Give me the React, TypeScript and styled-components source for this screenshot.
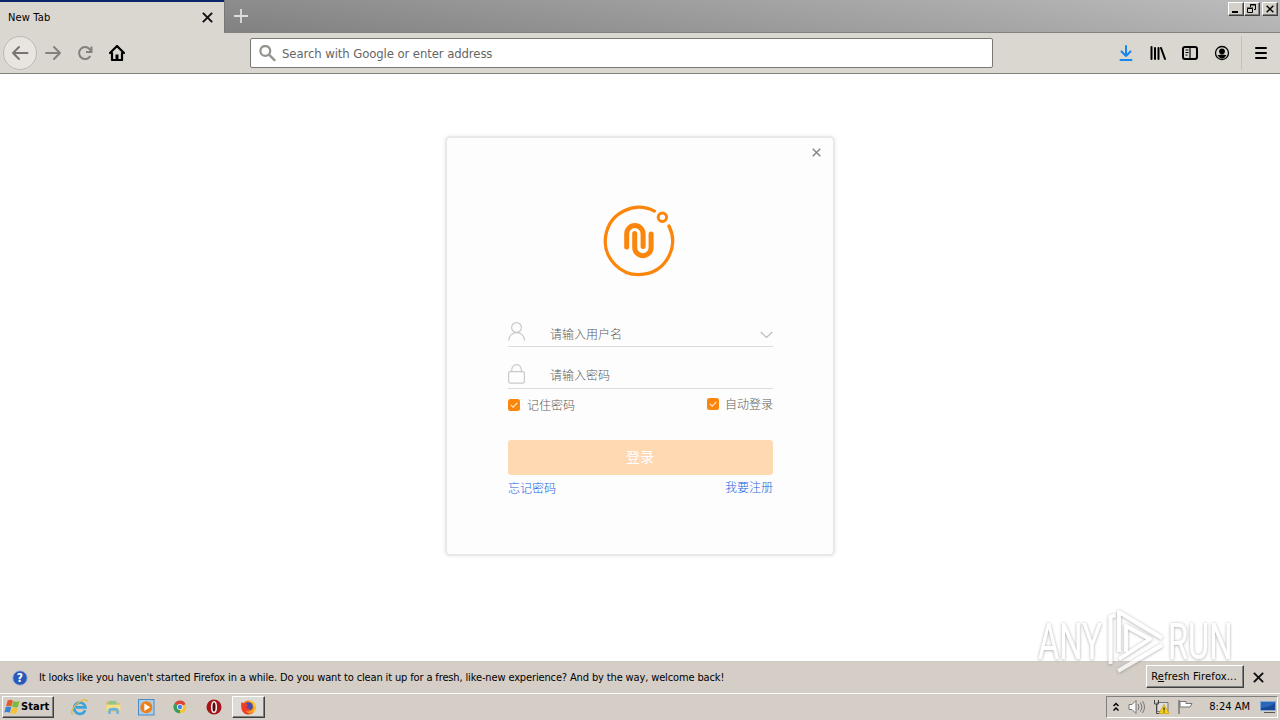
import * as React from 'react'
import styled, { createGlobalStyle } from 'styled-components';

const GlobalStyle = createGlobalStyle`
    * { box-sizing: border-box; }
    body {
        margin: 0;
        overflow: hidden;
        font-family: "DejaVu Sans Condensed", "DejaVu Sans", "Noto Sans CJK SC", sans-serif;
        font-size: 11px;
        color: #000;
    }
    svg { display: block; flex: none; }
`
const Screen = styled.div`
    position: relative;
    display: flex;
    flex-direction: column;
    width: 1280px;
    height: 720px;
    background: #fff;
`
const Label = styled.span<{ $size?: number; $spacing?: number; $color?: string }>`
    font-size: ${p => p.$size || 11}px;
    letter-spacing: ${p => p.$spacing || 0}px;
    color: ${p => p.$color || '#000'};
    white-space: nowrap;
    line-height: 16px;
`
const TabStrip = styled.div`
    display: flex;
    height: 33px;
    flex: none;
    background: linear-gradient(to bottom, rgba(255,255,255,.06), rgba(0,0,0,.03)),
        linear-gradient(to right, #868686 0, #868686 260px, #a9a9a9 1000px, #b9b9b9 1280px);
    border-bottom: 1px solid #848280;
`
const Tab = styled.div`
    display: flex;
    align-items: center;
    justify-content: space-between;
    width: 224px;
    height: 33px;
    padding: 0 11px 1px 8px;
    background: #dad6d0;
    border-top: 2px solid #0a246a;
`
const TabTitle = styled.div`
    padding-top: 1px;
`
const NewTab = styled.div`
    display: flex;
    align-items: center;
    width: 40px;
    padding-left: 9px;
    border-left: 1px solid #777;
`
const WindowButtons = styled.div`
    display: flex;
    margin: 2px 2px 0 auto;
`
const WindowButton = styled.div<{ $gap?: boolean }>`
    display: flex;
    align-items: center;
    justify-content: center;
    width: 16px;
    height: 14px;
    margin-left: ${p => (p.$gap ? 2 : 0)}px;
    background: #d4d0c8;
    border: 1px solid;
    border-color: #fff #404040 #404040 #fff;
    box-shadow: inset -1px -1px #808080;
`
const Toolbar = styled.div`
    display: flex;
    align-items: center;
    height: 41px;
    flex: none;
    padding: 0 12px 0 3px;
    background: #dad6d0;
    border-bottom: 1px solid #82807d;
`
const BackButton = styled.div`
    display: flex;
    align-items: center;
    justify-content: center;
    width: 34px;
    height: 34px;
    border: 1px solid #bdb9b3;
    border-radius: 50%;
    background: #e8e5e1;
`
const NavIcons = styled.div`
    display: flex;
    gap: 16px;
    width: 213px;
    padding-left: 8px;
`
const AddressBar = styled.div`
    display: flex;
    align-items: center;
    gap: 6px;
    width: 743px;
    height: 30px;
    padding: 1px 0 0 8px;
    background: #fff;
    border: 1px solid #7b7975;
    border-radius: 2px;
`
const ToolIcons = styled.div`
    display: flex;
    align-items: center;
    gap: 16px;
    margin-left: auto;
    padding-right: 11px;
`
const MenuSlot = styled.div`
    display: flex;
    align-items: center;
    height: 34px;
    padding-left: 12px;
    border-left: 1px solid #c4c0ba;
`
const Page = styled.div`
    display: flex;
    flex: 1;
    justify-content: center;
    align-items: flex-start;
    padding-top: 64px;
`
const LoginCard = styled.div`
    display: flex;
    flex-direction: column;
    width: 386px;
    height: 416px;
    padding: 0 60px 0 61px;
    background: #fdfdfd;
    border-radius: 3px;
    box-shadow: 0 0 0 2px #e9e9e9, 0 0 3px 3px #f1f1f1;
`
const CloseRow = styled.div`
    display: flex;
    justify-content: flex-end;
    height: 67px;
    margin-right: -48px;
    padding-top: 10px;
`
const LogoRow = styled.div`
    display: flex;
    justify-content: center;
    height: 109px;
    padding-right: 4px;
`
const Field = styled.div<{ $top?: number }>`
    display: flex;
    align-items: center;
    height: 33px;
    margin-top: ${p => p.$top || 0}px;
    border-bottom: 1px solid #dcdcdc;
`
const FieldIcon = styled.div<{ $drop: number }>`
    width: 18px;
    padding-top: ${p => p.$drop}px;
`
const Placeholder = styled.span<{ $drop: number }>`
    flex: 1;
    padding: ${p => p.$drop}px 0 0 24px;
    font: 300 12px/18px "Noto Sans CJK SC", sans-serif;
    color: #5c5c5c;
`
const Split = styled.div<{ $height: number }>`
    display: flex;
    justify-content: space-between;
    height: ${p => p.$height}px;
`
const Check = styled.label<{ $gap: number; $drop: number }>`
    display: flex;
    align-items: center;
    gap: ${p => p.$gap}px;
    height: 18px;
    margin-top: ${p => p.$drop}px;
    font: 300 12px/18px "Noto Sans CJK SC", sans-serif;
    color: #5c5c5c;
`
const LoginButton = styled.button`
    height: 35px;
    flex: none;
    padding: 0 1px 2px 0;
    border: 0;
    border-radius: 3px;
    background: #ffd9b1;
    color: #fff;
    font: 400 14px/33px "Noto Sans CJK SC", sans-serif;
`
const Link = styled.a<{ $drop: number }>`
    margin-top: ${p => p.$drop}px;
    font: 300 12px/18px "Noto Sans CJK SC", sans-serif;
    color: #1a62e0;
`
const NoticeBar = styled.div`
    display: flex;
    align-items: center;
    height: 32px;
    flex: none;
    padding: 0 16px 0 12px;
    background: #d4cec7;
    border-top: 1px solid #cdcac4;
`
const NoticeText = styled.div`
    flex: 1;
    padding-left: 11px;
`
const RaisedButton = styled.div`
    display: flex;
    align-items: center;
    justify-content: center;
    width: 98px;
    height: 23px;
    margin: 0 9px 2px 0;
    padding-right: 2px;
    background: #d4cfc8;
    border: 1px solid;
    border-color: #fff #404040 #404040 #fff;
    box-shadow: inset -1px -1px #808080;
`
const Taskbar = styled.div`
    display: flex;
    align-items: center;
    height: 27px;
    flex: none;
    padding: 0 2px;
    background: #d4cec7;
    border-top: 1px solid #fff;
`
const StartButton = styled.div`
    display: flex;
    align-items: center;
    width: 52px;
    height: 22px;
    padding-left: 1px;
    font-weight: bold;
    border: 1px solid;
    border-color: #fff #404040 #404040 #fff;
    box-shadow: inset -1px -1px #808080;
`
const QuickLaunch = styled.div`
    display: flex;
    align-items: center;
    gap: 16px;
    padding: 0 10px 0 17px;
`
const ActiveApp = styled.div`
    display: flex;
    align-items: center;
    justify-content: center;
    width: 33px;
    height: 22px;
    background: #dedad5;
    border: 1px solid;
    border-color: #fff #404040 #404040 #fff;
    box-shadow: inset -1px -1px #808080;
`
const Tray = styled.div`
    display: flex;
    align-items: center;
    width: 172px;
    height: 22px;
    margin-left: auto;
    padding: 0 1px 0 6px;
    border: 1px solid;
    border-color: #808080 #fff #fff #808080;
`
const TrayIcons = styled.div`
    display: flex;
    align-items: center;
    gap: 7px;
    padding-left: 9px;
`
const Clock = styled.div`
    display: flex;
    align-items: center;
    gap: 10px;
    margin-left: auto;
`
const Watermark = styled.svg`
    position: absolute;
    left: 1030px;
    top: 602px;
`

const Cross = ({ size, color, width }: { size: number; color: string; width: number }) => (
    <svg width={size} height={size} viewBox="0 0 10 10" fill="none" stroke={color} strokeWidth={width}>
        <path d="M.8 .8 9.2 9.2M9.2 .8 .8 9.2" />
    </svg>
)

const Logo = () => (
    <svg width="72" height="72" viewBox="13 15 72 72" fill="none" stroke="#fb860b" strokeLinecap="round">
        <path d="M64.3 21.1A33.6 33.6 0 1 0 79 36" strokeWidth="3.3" />
        <circle cx="72.4" cy="27.3" r="4.2" strokeWidth="3" />
        <path d="M36.7 57V43.8a8.2 8.2 0 0 1 16.4 0V56.5" strokeWidth="5" />
        <path d="M44.7 43.5V57.5a8.2 8.2 0 0 0 16.4 0V44" strokeWidth="5" />
    </svg>
)

const CheckMark = () => (
    <svg width="12" height="12" viewBox="0 0 12 12">
        <rect width="12" height="12" rx="2.5" fill="#fb860b" />
        <path d="M2.8 5.9 5.2 8.2 9.3 3.8" fill="none" stroke="#ffe8cc" strokeWidth="1.2" />
    </svg>
)

const WindowsFlag = () => (
    <svg width="17" height="16" viewBox="0 0 16 16">
        <path d="M3.2 1.5q2.5-1.5 5.2.2L6.9 7.5Q4.3 6 1.5 7.3z" fill="#e5592b" />
        <path d="M8.9 2.1q2.7 1.4 6.1 0L13.5 8q-2.8 1.1-5.9-.2z" fill="#7dbb3c" />
        <path d="M1.3 8q2.7-1.3 5.4.2L5.3 13.7Q2.6 12.3-.1 13.5z" fill="#3c83cf" />
        <path d="M7.4 8.5q2.7 1.3 5.9.2L11.8 14.2q-2.7 1.2-5.8-.2z" fill="#f5c334" />
    </svg>
)

const Explorer = () => (
    <svg width="18" height="18" viewBox="0 0 18 18" fill="none">
        <path d="M14.2 12.3A5.7 5.7 0 1 1 14.5 9.4H5" stroke="#3ba2dc" strokeWidth="2.7" />
        <path d="M2.5 15.8C-1 16.5.5 11 5.5 6.3 10.5 1.8 16.8-.3 15.9 4" stroke="#e9b73c" strokeWidth="1.2" />
    </svg>
)

const Folder = () => (
    <svg width="17" height="18" viewBox="0 0 18 18">
        <path d="M1.5 3.5h6l1 1.5h7.5v9h-14.5z" fill="#d9b955" />
        <path d="M4 2.5h8v5h-8z" fill="#8fc78b" />
        <path d="M1.5 6.5h15v7h-15z" fill="#f4df8c" />
        <path d="M3.5 16.5v-5.5q5.5-2.5 11 0v5.5h-2.5v-3.5h-6v3.5z" fill="#68b0de" />
    </svg>
)

const MediaPlayer = () => (
    <svg width="17" height="17" viewBox="0 0 17 17">
        <rect x=".5" y=".5" width="15.5" height="15.5" fill="#a8cce9" stroke="#4a8dc4" />
        <circle cx="8.3" cy="8.3" r="6" fill="#ee7f1a" />
        <path d="M6.3 4.6 12.2 8.3 6.3 12z" fill="#fff" />
    </svg>
)

const Chrome = () => (
    <svg width="17" height="16" viewBox="0 0 16 16">
        <g transform="translate(1.5 1) scale(.87)">
            <path d="M8 8 1.7 4A7.3 7.3 0 0 1 14.6 5z" fill="#dc4437" />
            <path d="M8 8 14.6 5A7.3 7.3 0 0 1 8 15.3L5 10z" fill="#f6c630" />
            <path d="M8 8 8 15.3A7.3 7.3 0 0 1 1.7 4z" fill="#379c57" />
            <circle cx="8" cy="8" r="3.5" fill="#eee" />
            <circle cx="8" cy="8" r="2.5" fill="#4682e0" />
        </g>
    </svg>
)

const Opera = () => (
    <svg width="18" height="16" viewBox="-2 0 18 16">
        <circle cx="8" cy="8" r="7.5" fill="#a51418" />
        <ellipse cx="8" cy="8" rx="2.3" ry="5.3" fill="#5b080b" stroke="#eee" strokeWidth="1.6" />
    </svg>
)

const Firefox = () => (
    <svg width="17" height="17" viewBox="0 0 17 17">
        <circle cx="8.7" cy="8.5" r="7" fill="#f5751f" />
        <path d="M8 1.5q7-.8 7.8 6.5 0 4-3 6l1-6z" fill="#fbc52a" />
        <circle cx="8.8" cy="7.2" r="4" fill="#4a4aa8" />
        <path d="M1.5 3Q3 4.5 5 4.3 7 4.8 8.5 6.8L6.2 7.5Q7 10.5 10.5 9.7 9 12.5 5.5 12 8 15 12 14 6 17.5 2.5 12.5.5 8.500 1.5 3z" fill="#ee3c26" />
        <path d="M5.5 12.2q5 2 7.8-3.2.5 4.500-3.8 5.500z" fill="#fca527" />
    </svg>
)

const WatermarkLogo = () => (
    <Watermark width="212" height="78" viewBox="0 0 212 78">
        <defs>
            <filter id="soft" x="-10%" y="-10%" width="120%" height="130%">
                <feDropShadow dx="0" dy=".5" stdDeviation="1.6" floodColor="#555" floodOpacity=".75" />
            </filter>
        </defs>
        <g filter="url(#soft)" fill="#fff" fontFamily="Roboto, sans-serif" fontSize="49" opacity=".72">
            <text transform="translate(8 57) scale(.68 1)" textLength="94" lengthAdjust="spacingAndGlyphs">ANY</text>
            <text transform="translate(138 57) scale(.68 1)" textLength="95" lengthAdjust="spacingAndGlyphs">RUN</text>
        </g>
        <g filter="url(#soft)" fill="none" stroke="#fff" strokeWidth="3.8" strokeLinejoin="round" opacity=".72">
            <path d="M80.5 62V15l5-2M89 50V10L132 36" />
            <path d="M96 50V24l24 13L89 57M88 69 132 43" />
        </g>
    </Watermark>
)

const App: React.FC = () => {
    return (
        <Screen>
            <GlobalStyle />
            <TabStrip>
                <Tab>
                    <TabTitle><Label $spacing={0.15}>New Tab</Label></TabTitle>
                    <Cross size={11} color="#111" width={1.8} />
                </Tab>
                <NewTab>
                    <svg width="14" height="14" viewBox="0 0 14 14" stroke="#ddd" strokeWidth="1.8"><path d="M7 0v14M0 7h14" /></svg>
                </NewTab>
                <WindowButtons>
                    <WindowButton>
                        <svg width="10" height="10"><path d="M1 7h6v2H1z" /></svg>
                    </WindowButton>
                    <WindowButton>
                        <svg width="10" height="10" fill="none" stroke="#000"><path d="M3.5 3V.5h5v5H7M3 1h6M.5 4.5h5v4h-5zM0 4h6" /></svg>
                    </WindowButton>
                    <WindowButton $gap>
                        <Cross size={8} color="#000" width={1.8} />
                    </WindowButton>
                </WindowButtons>
            </TabStrip>

            <Toolbar>
                <BackButton>
                    <svg width="18" height="16" viewBox="0 0 18 16" fill="none" stroke="#777571" strokeWidth="2" strokeLinecap="round" strokeLinejoin="round"><path d="M16.5 8H2M8 2 2 8l6 6" /></svg>
                </BackButton>
                <NavIcons>
                    <svg width="16" height="16" viewBox="0 0 16 16" fill="none" stroke="#84817d" strokeWidth="2" strokeLinecap="round" strokeLinejoin="round"><path d="M1 8h14M9 2l6 6-6 6" /></svg>
                    <svg width="16" height="16" viewBox="0 0 16 16" fill="none" stroke="#84817d" strokeWidth="2"><path d="M13.3 11A6 6 0 1 1 12.5 4L14.5 6" /><path d="M14.5 1.5v5.5H9" /></svg>
                    <svg width="16" height="16" viewBox="0 0 16 16" fill="none" stroke="#000" strokeWidth="2.2" strokeLinecap="round" strokeLinejoin="round"><path d="M1 8 8 1l7 7M3 8v7h10V8" /><path d="M8 14.5V9.5" strokeWidth="3" strokeLinecap="butt" /></svg>
                </NavIcons>
                <AddressBar>
                    <svg width="17" height="17" viewBox="0 0 17 17" fill="none" stroke="#96948f" strokeWidth="2.3"><circle cx="6.3" cy="5.9" r="4.9" /><path d="m10 9.6 5.5 5.5" strokeLinecap="round" /></svg>
                    <Label $size={13} $spacing={-0.1} $color="#666">Search with Google or enter address</Label>
                </AddressBar>
                <ToolIcons>
                    <svg width="16" height="16" viewBox="0 0 16 16" fill="none" stroke="#1687ee" strokeWidth="2" strokeLinecap="round" strokeLinejoin="round"><path d="M8 1v10M3.5 6.5 8 11l4.5-4.5M2.5 15h11" /></svg>
                    <svg width="16" height="16" viewBox="0 0 16 16" stroke="#000" strokeWidth="2" strokeLinecap="round"><path d="M1.5 2v12M5 3v11M8.5 3v11M11 3l4 11" /></svg>
                    <svg width="16" height="16" viewBox="0 0 16 16" fill="none" stroke="#000" strokeWidth="2"><rect x="1" y="2" width="14" height="12" rx="2" /><path d="M8 2v12" strokeWidth="1.2" /><path d="M3.5 5h3M3.5 7.5h3M3.5 10h2" strokeWidth="1" /></svg>
                    <svg width="16" height="16" viewBox="0 0 16 16"><circle cx="8" cy="8" r="6.5" fill="none" stroke="#000" strokeWidth="1.3" /><circle cx="8" cy="6.3" r="2.9" /><path d="M3.5 10.3q4.5-1.500 9 0-2 3.200-4.500 3.200t-4.500-3.200z" /></svg>
                </ToolIcons>
                <MenuSlot>
                    <svg width="14" height="14" viewBox="0 0 14 14" stroke="#000" strokeWidth="2" strokeLinecap="round"><path d="M2 2h10M2 7h10M2 12h10" /></svg>
                </MenuSlot>
            </Toolbar>

            <Page>
                <LoginCard>
                    <CloseRow><Cross size={9} color="#858585" width={1.6} /></CloseRow>
                    <LogoRow><Logo /></LogoRow>
                    <Field>
                        <FieldIcon $drop={2}>
                            <svg width="18" height="19" viewBox="0 0 18 19" fill="none" stroke="#c9c9c9" strokeWidth="1.2"><circle cx="8.5" cy="5.5" r="4.9" /><path d="M.7 18.5C1 8 16.300 8 16.600 18.500" /></svg>
                        </FieldIcon>
                        <Placeholder $drop={7}>请输入用户名</Placeholder>
                        <svg width="13" height="24" viewBox="0 0 13 24" fill="none" stroke="#bbb" strokeWidth="1.2"><path d="m.7 14 5.800 5.500L12.300 14" /></svg>
                    </Field>
                    <Field $top={9}>
                        <FieldIcon $drop={4}>
                            <svg width="18" height="20" viewBox="0 0 18 20" fill="none" stroke="#c9c9c9" strokeWidth="1.2"><rect x=".6" y="7.600" width="15.800" height="11.500" rx="1.500" /><path d="M3.800 7.500V5.500a4.800 4.800 0 0 1 9.600 0v2" /></svg>
                        </FieldIcon>
                        <Placeholder $drop={5}>请输入密码</Placeholder>
                    </Field>
                    <Split $height={51}>
                        <Check $gap={7} $drop={7}><CheckMark />记住密码</Check>
                        <Check $gap={6} $drop={6}><CheckMark />自动登录</Check>
                    </Split>
                    <LoginButton>登录</LoginButton>
                    <Split $height={30}>
                        <Link $drop={4}>忘记密码</Link>
                        <Link $drop={3}>我要注册</Link>
                    </Split>
                </LoginCard>
            </Page>

            <NoticeBar>
                <svg width="16" height="16" viewBox="0 0 16 16">
                    <circle cx="8" cy="8" r="7.3" fill="#2859b8" stroke="#a9bbdc" />
                    <text x="8" y="12.3" fontSize="12" fontWeight="bold" textAnchor="middle" fill="#fff">?</text>
                </svg>
                <NoticeText>
                    <Label $spacing={-0.137}>It looks like you haven't started Firefox in a while. Do you want to clean it up for a fresh, like-new experience? And by the way, welcome back!</Label>
                </NoticeText>
                <RaisedButton><Label $spacing={0.16}>R<u>e</u>fresh Firefox...</Label></RaisedButton>
                <Cross size={11} color="#111" width={1.8} />
            </NoticeBar>

            <Taskbar>
                <StartButton><WindowsFlag /><Label $spacing={0.05}>Start</Label></StartButton>
                <QuickLaunch>
                    <Explorer />
                    <Folder />
                    <MediaPlayer />
                    <Chrome />
                    <Opera />
                </QuickLaunch>
                <ActiveApp><Firefox /></ActiveApp>
                <Tray>
                    <svg width="6" height="10" viewBox="0 0 6 10" fill="none" stroke="#000" strokeWidth="1.5"><path d="M.5 4 3 1.5 5.5 4M.5 8.5 3 6l2.5 2.5" /></svg>
                    <TrayIcons>
                        <svg width="18" height="16" viewBox="0 0 18 16" fill="none" stroke="#777"><path d="M1 5.5h3l4-4v13l-4-4H1z" fill="#f8f8f8" /><path d="M10 5q2 3 0 6M12.5 3.5q3 4.5 0 9M14.5 2q4 6 0 12" /></svg>
                        <svg width="17" height="16" viewBox="0 0 17 16"><path d="M4 3.5h11v9H4z" fill="#ddd" stroke="#777" /><path d="M1.5 1v4h4V1M3.5 5v9.5h4" fill="none" stroke="#444" /><path d="m11 5.5 5 9H6z" fill="#f9d313" stroke="#cc9d13" strokeWidth=".7" /><path d="M11 8.5v3M11 12.5v1" stroke="#222" strokeWidth="1.2" /></svg>
                        <svg width="17" height="16" viewBox="0 0 17 16"><path d="M2 1v14" stroke="#777" strokeWidth="1.5" /><path d="M3 2.5h6v2h6l-2 3.5H8V8H3z" fill="#fff" stroke="#777" /></svg>
                    </TrayIcons>
                    <Clock>
                        <Label>8:24 AM</Label>
                        <svg width="16" height="14" viewBox="0 0 16 14"><path d="M.5 1.5h15v9H.5z" fill="#2b66ba" stroke="#83a9d6" /><path d="M1 8q7 0 14-5v7H1z" fill="#174994" /><path d="M4 12.5h11" stroke="#555" /></svg>
                    </Clock>
                </Tray>
            </Taskbar>
            <WatermarkLogo />
        </Screen>
    )
}

export default App;
